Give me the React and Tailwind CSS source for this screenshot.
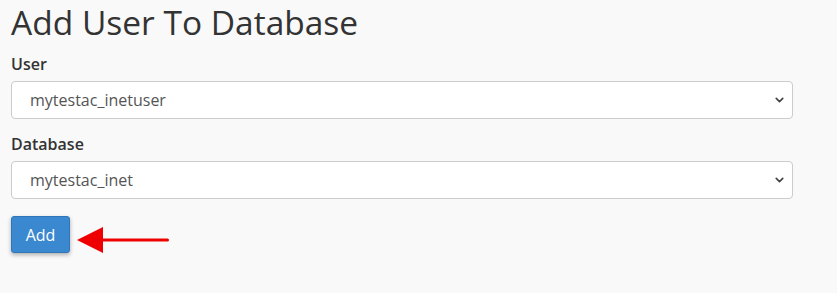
import { ChevronDown } from 'lucide-react';

const Field = ({ label, value, className }) => (
  <div className={className}>
    <label className="block text-[16px] font-semibold text-[#333] leading-[22px] mb-[6px]">{label}</label>
    <div className="relative">
      <select
        defaultValue={value}
        className="w-full h-[38px] appearance-none rounded-[4px] border border-[#ccc] bg-white pl-[18px] pr-8 text-[16px] text-[#555] outline-none"
      >
        <option value={value}>{value}</option>
      </select>
      <ChevronDown className="pointer-events-none absolute right-[7px] top-1/2 -translate-y-1/2 w-[13px] h-[13px] text-[#444]" strokeWidth={3} />
    </div>
  </div>
);

export default function App() {
  return (
    <div className="min-h-[293px] bg-[#f9f9f9] pl-[11px] pr-[44px] pt-[2px] font-['Open_Sans',sans-serif]">
      <h1 className="text-[33.5px] leading-[40px] text-[#333] mb-[11px]">Add User To Database</h1>
      <Field label="User" value="mytestac_inetuser" />
      <Field label="Database" value="mytestac_inet" className="mt-[14px]" />
      <div className="flex items-start mt-[17px]">
        <button className="h-[37px] w-[59px] rounded-[3px] bg-[#3a88d0] border border-[#2f76b9] text-white text-[16px] shadow-[0_2px_4px_rgba(0,0,0,0.3)]">
          Add
        </button>
        <svg width="98" height="28" viewBox="0 0 98 28" className="ml-[6px] mt-[10px]">
          <polygon points="1,14 27,1 27,27" fill="#ee0000" />
          <rect x="24" y="12.5" width="69" height="3" rx="1.5" fill="#ee0000" />
        </svg>
      </div>
    </div>
  );
}
